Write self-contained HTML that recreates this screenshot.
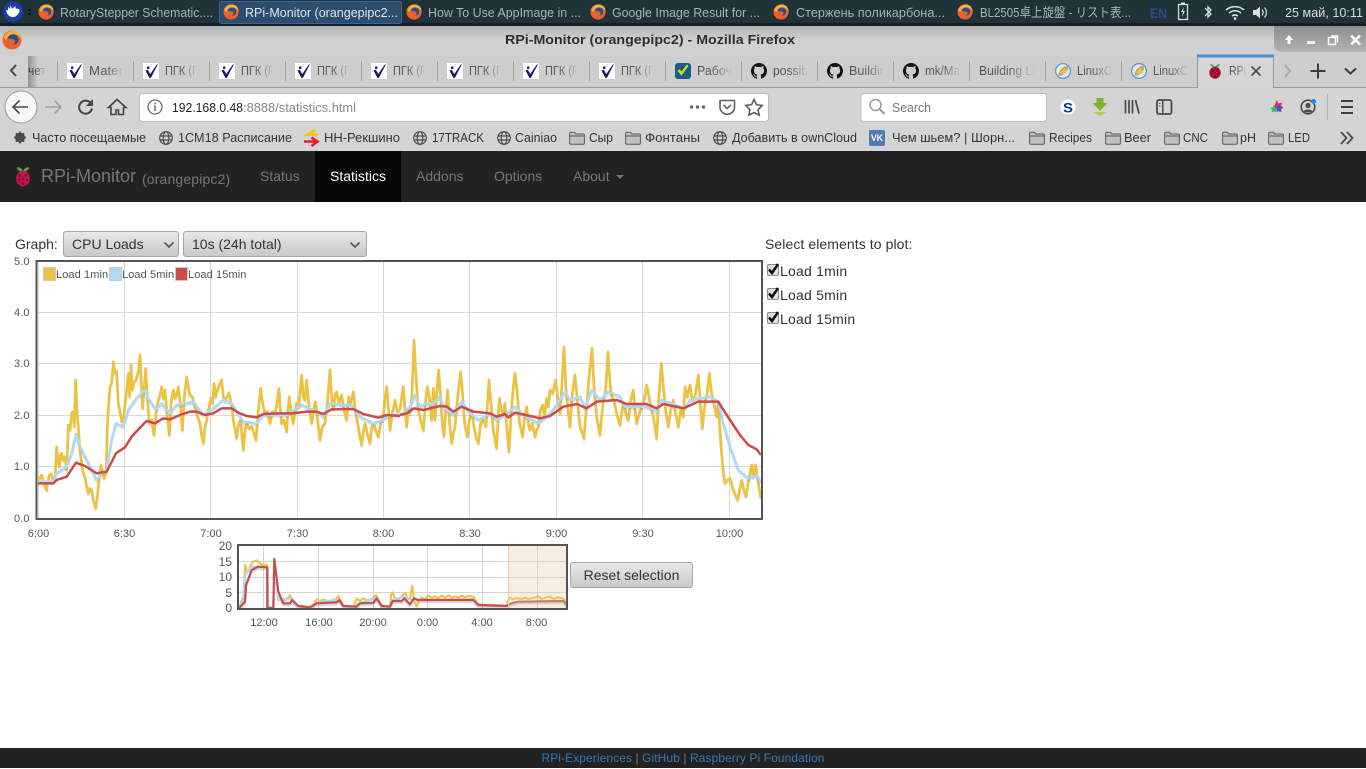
<!DOCTYPE html>
<html lang="en">
<head>
<meta charset="utf-8">
<title>RPi-Monitor (orangepipc2)</title>
<style>
html,body{margin:0;padding:0;background:#fff}
body{position:relative;width:1366px;height:768px;overflow:hidden;font-family:"Liberation Sans","Noto Sans CJK JP",sans-serif;color:#333;font-size:14px}
svg text{font-family:"Liberation Sans","Noto Sans CJK JP",sans-serif}
.abs{position:absolute;white-space:nowrap}
#nav{position:absolute;left:0;top:151px;width:1366px;height:51px;background:#222}
#nav a{position:absolute;top:0;line-height:50px;font-size:14px;color:#777;white-space:nowrap}
.sel{position:absolute;top:231px;height:24px;box-sizing:content-box;border:1px solid #a8a8a8;border-radius:3px;background:linear-gradient(#e8e8e8,#c9c9c9);line-height:24px;font-size:14px;color:#333}
.sel span{position:absolute;left:8px;top:0}
.sel svg{position:absolute;top:9px}
#reset{position:absolute;left:570px;top:562px;width:121px;height:24px;border:1px solid #a8a8a8;border-radius:3px;background:linear-gradient(#e8e8e8,#c9c9c9);font-size:14px;line-height:24px;text-align:center;color:#333}
#foot{position:absolute;left:0;top:748px;width:1366px;height:20px;background:#222;color:#777;font-size:12px;line-height:21px;text-align:center;letter-spacing:.08px}
#foot a{color:#337ab7}
.chk{position:absolute;left:780px;font-size:14px;color:#333;white-space:nowrap;letter-spacing:.22px}
</style>
</head>
<body>
<svg class="abs" style="left:0;top:0" width="1366" height="151" viewBox="0 0 1366 151">
<defs>
<linearGradient id="title" x1="0" y1="0" x2="0" y2="1"><stop offset="0" stop-color="#b4b4b4"/><stop offset=".5" stop-color="#d2d2d2"/><stop offset="1" stop-color="#cfcfcf"/></linearGradient>
<linearGradient id="wbtn" x1="0" y1="0" x2="0" y2="1"><stop offset="0" stop-color="#8e8e8e"/><stop offset="1" stop-color="#b2b2b2"/></linearGradient>
<linearGradient id="tf" x1="0" y1="0" x2="1" y2="0"><stop offset="0" stop-color="#4e4e4e"/><stop offset=".55" stop-color="#666"/><stop offset="1" stop-color="#cbcbcb"/></linearGradient>
<linearGradient id="sh" x1="0" y1="0" x2="1" y2="0"><stop offset="0" stop-color="#000" stop-opacity=".3"/><stop offset="1" stop-color="#000" stop-opacity="0"/></linearGradient>
<symbol id="ff" viewBox="0 0 16 16"><circle cx="8" cy="8" r="7.6" fill="#e8602a"/><path d="M1.4 6C3 1.4 8-.6 12 1.2c2.6 1.2 3.8 4 3.4 6.6C14.600 4.800 12 3.400 9.500 3.600 6 3.900 4 5.500 3.200 8.500 2.800 7.700 2 6.800 1.400 6z" fill="#fbb03b"/><circle cx="8.800" cy="7.800" r="4.400" fill="#25508f"/><path d="M4.500 6.500c1.500 1 4 .2 5.500 1.500 1 1 .5 3-1.500 3.500 3 .5 5.500-1.500 5-5 1.500 4-.5 7.500-4.500 8.200C5 15 2.500 11 4.500 6.500z" fill="#e8602a"/></symbol>
<symbol id="chk" viewBox="0 0 16 16"><rect width="16" height="16" fill="#fff"/><path d="M2.500 7.500l2.200-.8 2.600 4.300L13.800 1.500h1L7.800 15H6.500z" fill="#1c1762"/><circle cx="5.200" cy="4.700" r="1.300" fill="#1c1762"/></symbol>
<symbol id="gh" viewBox="0 0 16 16"><path fill="#111" d="M8 0C3.580 0 0 3.580 0 8c0 3.540 2.290 6.530 5.470 7.590.4.070.55-.17.55-.38 0-.19-.01-.82-.01-1.490-2.010.37-2.530-.49-2.690-.94-.09-.23-.48-.94-.82-1.130-.28-.15-.68-.52-.01-.53.63-.01 1.080.58 1.230.82.720 1.210 1.870.87 2.330.66.070-.52.280-.87.510-1.070-1.780-.2-3.640-.89-3.640-3.950 0-.87.310-1.590.820-2.150-.080-.2-.360-1.020.080-2.120 0 0 .670-.21 2.200.82.640-.18 1.320-.27 2-.27.680 0 1.360.09 2 .27 1.530-1.040 2.200-.82 2.200-.82.440 1.100.160 1.920.080 2.120.510.560.820 1.270.820 2.150 0 3.070-1.870 3.750-3.650 3.950.290.250.540.730.540 1.480 0 1.070-.010 1.930-.010 2.200 0 .210.150.460.550.380A8.013 8.013 0 0016 8c0-4.420-3.580-8-8-8z"/></symbol>
<symbol id="lx" viewBox="0 0 16 16"><circle cx="8" cy="8" r="7.400" fill="#dcebf7" stroke="#4c94d0" stroke-width="1.200"/><path d="M3.500 11.500C3.500 8 8 3 11.500 3c1.500 0 2 1.500 1.500 3-1 3-5 6.500-7.500 7-1.200.2-2-.4-2-1.500z" fill="#d9a93f"/><path d="M6 10l4-4M7.500 11l3.500-3.500" stroke="#f2dc9a" stroke-width=".8"/></symbol>
<symbol id="rb" viewBox="0 0 16 16"><path d="M8 4C6 1 4 1 3 1.500 4 3 5.500 4.500 8 4.500 10.500 4.500 12 3 13 1.500 12 1 10 1 8 4z" fill="#4ea24a"/><ellipse cx="8" cy="9.700" rx="5.800" ry="6" fill="#b3123f"/><circle cx="5.500" cy="7.500" r="1.100" fill="#7d0d2c"/><circle cx="10.500" cy="7.500" r="1.100" fill="#7d0d2c"/><circle cx="8" cy="10" r="1.200" fill="#7d0d2c"/><circle cx="5" cy="11" r="1.100" fill="#7d0d2c"/><circle cx="11" cy="11" r="1.100" fill="#7d0d2c"/><circle cx="8" cy="13.500" r="1.100" fill="#7d0d2c"/></symbol>
<symbol id="gl" viewBox="0 0 14 14"><g fill="none" stroke="#4b4b4b" stroke-width="1.200"><circle cx="7" cy="7" r="6.300"/><ellipse cx="7" cy="7" rx="2.800" ry="6.300"/><path d="M1 5h12M1 9h12"/></g></symbol>
<symbol id="fd" viewBox="0 0 16 14"><path d="M.6 2.500c0-.8.500-1.300 1.200-1.300h3.600l1.600 1.800h7.200c.7 0 1.200.5 1.200 1.200v7.800c0 .7-.5 1.200-1.200 1.200H1.800c-.7 0-1.200-.5-1.200-1.200z" fill="#c0c0c0" stroke="#5a5a5a" stroke-width="1"/><path d="M1 5h14" stroke="#5a5a5a" stroke-width="1"/></symbol>
</defs>

<!-- panel -->
<rect width="1366" height="25" fill="#1f3339"/>
<rect y="23" width="1366" height="3" fill="#141f23"/>
<rect x="219.500" y="1.500" width="182" height="22" rx="2" fill="#2d4d70" stroke="#3c6490"/>
<circle cx="13" cy="11.500" r="10" fill="#1d3fa6"/>
<path d="M6.500 10.500l1.500-.5.300-3.500 1.800 2.700.4-3.700 2 3.200 2.700-2.700.5 2.800c1.600-.4 3.800 0 4 1.700-1 3.500-3.500 6.800-7 6.600-3.500-.2-5.700-2.700-6.700-6.600z" fill="#fff"/>
<rect x="28" y="9" width="3" height="2" fill="#0e181b"/><rect x="28" y="13" width="3" height="2" fill="#0e181b"/>
<use href="#ff" x="38" y="4" width="16" height="16"/><use href="#ff" x="223" y="4" width="16" height="16"/><use href="#ff" x="406" y="4" width="16" height="16"/><use href="#ff" x="590" y="4" width="16" height="16"/><use href="#ff" x="773" y="4" width="16" height="16"/><use href="#ff" x="957" y="4" width="16" height="16"/>
<g font-size="13" fill="#a8b4b8">
<text x="60" y="17" textLength="153" lengthAdjust="spacingAndGlyphs">RotaryStepper Schematic....</text>
<text x="245" y="17" textLength="153" lengthAdjust="spacingAndGlyphs" fill="#dfe7ec">RPi-Monitor (orangepipc2...</text>
<text x="428" y="17" textLength="153" lengthAdjust="spacingAndGlyphs">How To Use AppImage in ...</text>
<text x="612" y="17" textLength="148" lengthAdjust="spacingAndGlyphs">Google Image Result for ...</text>
<text x="796" y="17" textLength="149" lengthAdjust="spacingAndGlyphs">Стержень поликарбона...</text>
<text x="980" y="17" textLength="151" lengthAdjust="spacingAndGlyphs">BL2505卓上旋盤 - リスト表...</text>
<text x="1285" y="17" textLength="78" lengthAdjust="spacingAndGlyphs" fill="#d8dfe2">25 май, 10:11</text>
</g>
<text x="1150" y="18" font-size="14" font-weight="bold" fill="#2f4a90" textLength="17" lengthAdjust="spacingAndGlyphs">EN</text>
<rect x="1178.500" y="4.500" width="9" height="15" fill="none" stroke="#d8dfe2" stroke-width="1.300"/><rect x="1181" y="2.500" width="4" height="2" fill="#d8dfe2"/><path d="M1184 7l-3 5h2l-1 5 3-6h-2z" fill="#d8dfe2"/>
<path d="M1205 8l6 6-3 3V7l3 3-6 6" fill="none" stroke="#d8dfe2" stroke-width="1.300"/>
<g fill="none" stroke="#d8dfe2" stroke-width="1.600"><path d="M1226 10c5.500-4.500 12.500-4.500 18 0"/><path d="M1229 13c3.500-3 8.500-3 12 0"/><path d="M1232 16c2-1.500 4-1.500 6 0"/></g><circle cx="1235" cy="18.500" r="1.400" fill="#d8dfe2"/>
<path d="M1253 10h3l4-3.500v12l-4-3.500h-3z" fill="#d8dfe2"/><g fill="none" stroke="#d8dfe2" stroke-width="1.200"><path d="M1262 9.500c1.500 2 1.500 4 0 6"/><path d="M1264.500 7.500c2.500 3 2.500 7 0 10"/></g>

<!-- titlebar -->
<rect y="26" width="1366" height="30" fill="url(#title)"/>
<path d="M1274 26h92v26h-84c-5 0-8-3-8-7z" fill="url(#wbtn)"/>
<use href="#ff" x="2" y="30" width="20" height="20"/>
<text x="505" y="44" font-size="13" font-weight="bold" fill="#2e2e2e" textLength="290" lengthAdjust="spacingAndGlyphs">RPi-Monitor (orangepipc2) - Mozilla Firefox</text>
<path d="M1285 40l4-5 4 5h-2.500v4h-3v-4z" fill="#fff"/>
<rect x="1307" y="41" width="8" height="3" fill="#f2f2f2"/>
<g fill="none" stroke="#fff" stroke-width="1.500"><rect x="1328.500" y="37.500" width="7" height="7"/><path d="M1331 36h6.500v6.500"/></g>
<path d="M1351 35.500l9 9m0-9l-9 9" stroke="#fff" stroke-width="2.600"/>

<!-- tabs -->
<rect y="56" width="1366" height="32" fill="#cecece"/>
<rect y="87" width="1366" height="1" fill="#9a9a9a"/>
<g fill="#a3a3a3">
<rect x="57" y="61" width="1" height="20"/><rect x="133" y="61" width="1" height="20"/><rect x="209" y="61" width="1" height="20"/><rect x="285" y="61" width="1" height="20"/><rect x="361" y="61" width="1" height="20"/><rect x="437" y="61" width="1" height="20"/><rect x="513" y="61" width="1" height="20"/><rect x="589" y="61" width="1" height="20"/><rect x="665" y="61" width="1" height="20"/><rect x="741" y="61" width="1" height="20"/><rect x="817" y="61" width="1" height="20"/><rect x="893" y="61" width="1" height="20"/><rect x="969" y="61" width="1" height="20"/><rect x="1045" y="61" width="1" height="20"/><rect x="1121" y="61" width="1" height="20"/>
</g>
<text x="28" y="75" font-size="13" fill="url(#tf)" textLength="18" lengthAdjust="spacingAndGlyphs">чет</text>
<rect x="0" y="55" width="28" height="32" fill="#d2d2d2"/>
<rect x="28" y="56" width="10" height="31" fill="url(#sh)"/>
<path d="M16 65l-5 5.500 5 5.500" fill="none" stroke="#4a4a4a" stroke-width="2"/>
<use href="#chk" x="67" y="63" width="16" height="16"/><use href="#chk" x="143" y="63" width="16" height="16"/><use href="#chk" x="219" y="63" width="16" height="16"/><use href="#chk" x="295" y="63" width="16" height="16"/><use href="#chk" x="371" y="63" width="16" height="16"/><use href="#chk" x="447" y="63" width="16" height="16"/><use href="#chk" x="523" y="63" width="16" height="16"/><use href="#chk" x="599" y="63" width="16" height="16"/>
<rect x="675" y="63" width="16" height="16" rx="3" fill="#1d5a86"/><path d="M678 71l3.500 4 6.500-9-1-1-5.500 7-2-2.200z" fill="#b8e02f" stroke="#b8e02f" stroke-width=".8"/>
<use href="#gh" x="751" y="63" width="16" height="16"/><use href="#gh" x="827" y="63" width="16" height="16"/><use href="#gh" x="903" y="63" width="16" height="16"/>
<use href="#lx" x="1055" y="63" width="16" height="16"/><use href="#lx" x="1131" y="63" width="16" height="16"/>
<g font-size="13" fill="url(#tf)">
<text x="89" y="75" textLength="34" lengthAdjust="spacingAndGlyphs">Mater</text>
<text x="165" y="75" textLength="33" lengthAdjust="spacingAndGlyphs">ПГК (Г</text>
<text x="241" y="75" textLength="33" lengthAdjust="spacingAndGlyphs">ПГК (Г</text>
<text x="317" y="75" textLength="33" lengthAdjust="spacingAndGlyphs">ПГК (Г</text>
<text x="393" y="75" textLength="33" lengthAdjust="spacingAndGlyphs">ПГК (Г</text>
<text x="469" y="75" textLength="33" lengthAdjust="spacingAndGlyphs">ПГК (Г</text>
<text x="545" y="75" textLength="33" lengthAdjust="spacingAndGlyphs">ПГК (Г</text>
<text x="621" y="75" textLength="33" lengthAdjust="spacingAndGlyphs">ПГК (Г</text>
<text x="697" y="75" textLength="35" lengthAdjust="spacingAndGlyphs">Рабоч</text>
<text x="773" y="75" textLength="35" lengthAdjust="spacingAndGlyphs">possib</text>
<text x="849" y="75" textLength="35" lengthAdjust="spacingAndGlyphs">Buildir</text>
<text x="925" y="75" textLength="35" lengthAdjust="spacingAndGlyphs">mk/Ma</text>
<text x="979" y="75" textLength="56" lengthAdjust="spacingAndGlyphs">Building Li</text>
<text x="1077" y="75" textLength="35" lengthAdjust="spacingAndGlyphs">LinuxC</text>
<text x="1153" y="75" textLength="35" lengthAdjust="spacingAndGlyphs">LinuxC</text>
</g>
<path d="M1197.500 88V55.500h76V88" fill="#d6d6d6" stroke="#9a9a9a"/>
<rect x="1197" y="54.500" width="77" height="3" fill="#4a90d9"/>
<use href="#rb" x="1207" y="63" width="16" height="16"/>
<text x="1229" y="75" font-size="13" fill="url(#tf)" textLength="17" lengthAdjust="spacingAndGlyphs">RPi</text>
<path d="M1251.500 66.500l9 9m0-9l-9 9" stroke="#4a4a4a" stroke-width="1.600"/>
<path d="M1285 65l5 6-5 6" fill="none" stroke="#a9a9a9" stroke-width="2"/>
<path d="M1318 63.500v15M1310.500 71h15" stroke="#3a3a3a" stroke-width="2"/>
<path d="M1345 68.500l5.500 5 5.500-5" fill="none" stroke="#3a3a3a" stroke-width="2"/>

<!-- nav -->
<rect y="88" width="1366" height="63" fill="#d4d4d4"/>
<circle cx="21" cy="107" r="16" fill="#f7f7f7" stroke="#9a9a9a"/>
<path d="M28 107H13.500M19.500 100.500L13 107l6.500 6.500" fill="none" stroke="#4a4a4a" stroke-width="1.600"/>
<path d="M45 107h15M54.500 100.500L61 107l-6.500 6.500" fill="none" stroke="#a2a2a2" stroke-width="1.600"/>
<path d="M91 103.500a6.500 6.500 0 1 0 1 5" fill="none" stroke="#444" stroke-width="2"/><path d="M93 99v7h-7z" fill="#444"/>
<path d="M117 99.500l-8.500 8h2.500v7h5v-4.500h2.500v4.500h5v-7h2.500z" fill="none" stroke="#444" stroke-width="1.600"/>
<rect x="139.500" y="93.500" width="629" height="28" rx="3" fill="#fff" stroke="#bdbdbd"/>
<circle cx="155" cy="107" r="7" fill="none" stroke="#6c6c6c" stroke-width="1.300"/><rect x="154.200" y="105.500" width="1.600" height="5.500" fill="#6c6c6c"/><rect x="154.200" y="102.800" width="1.600" height="1.600" fill="#6c6c6c"/>
<text x="172" y="112" font-size="13" fill="#222" textLength="71" lengthAdjust="spacingAndGlyphs">192.168.0.48</text>
<text x="243" y="112" font-size="13" fill="#888" textLength="113" lengthAdjust="spacingAndGlyphs">:8888/statistics.html</text>
<circle cx="691.500" cy="107" r="1.700" fill="#6a6a6a"/><circle cx="697.500" cy="107" r="1.700" fill="#6a6a6a"/><circle cx="703.500" cy="107" r="1.700" fill="#6a6a6a"/>
<path d="M720 100.500h14.500v6.500a7.200 7.200 0 0 1-14.500 0z" fill="none" stroke="#5f5f5f" stroke-width="1.600"/><path d="M723.500 104.800l3.700 3.700 3.700-3.700" fill="none" stroke="#5f5f5f" stroke-width="1.600"/>
<path d="M754 99.500l2.500 5.200 5.700.8-4.100 4 1 5.700-5.100-2.700-5.100 2.700 1-5.700-4.100-4 5.700-.8z" fill="none" stroke="#5f5f5f" stroke-width="1.600"/>
<rect x="861" y="93.500" width="185.500" height="28" rx="3" fill="#fff" stroke="#bdbdbd"/>
<circle cx="875.500" cy="105" r="5.500" fill="none" stroke="#9a9a9a" stroke-width="1.500"/><path d="M879.500 109l5 5" stroke="#9a9a9a" stroke-width="2"/>
<text x="892" y="112" font-size="13" fill="#777" textLength="39" lengthAdjust="spacingAndGlyphs">Search</text>
<circle cx="1068" cy="107" r="7.500" fill="#fff"/><text x="1063" y="112.500" font-size="14" font-weight="bold" fill="#0b3a8c" textLength="10" lengthAdjust="spacingAndGlyphs">S</text>
<path d="M1096.500 98h7v5h4l-7.500 8-7.500-8h4z" fill="#7fb32c"/><path d="M1094 112h12l-6 4z" fill="#a3cf4a"/>
<path d="M1125.500 100v13.500M1129 100v13.500M1132.500 100v13.500M1135.500 100l3.500 13.500" stroke="#4a4a4a" stroke-width="1.700" fill="none"/>
<rect x="1157" y="100" width="14.500" height="14" rx="2" fill="none" stroke="#4a4a4a" stroke-width="1.800"/><rect x="1162" y="100" width="1.500" height="14" fill="#4a4a4a"/><path d="M1159 103.500h1.500M1159 106h1.500" stroke="#4a4a4a"/>
<path d="M1277 100l1.500 3.500 3.500-1-.8 3.500 2.300 2-3.500 1 .5 3-3.500-1.500-2-3-2 .5z" fill="#ef2b55"/>
<path d="M1279 104l1.300 2.700 3 .4-2.200 2.100.5 3-2.600-1.400-2.600 1.400.5-3-2.200-2.100 3-.4z" fill="#3c55d8"/>
<path d="M1274 105l1 2.500 2.800.3-2 1.900.5 2.800-2.300-1.300-2.500 1.300.5-2.800-2-1.900 2.800-.3z" fill="#22c75c"/>
<circle cx="1308" cy="107" r="6.800" fill="none" stroke="#4a4a4a" stroke-width="1.600"/><circle cx="1308" cy="105.500" r="2.600" fill="#4a4a4a"/><path d="M1303.500 111c1.500-2 7.500-2 9 0-1.500 2-7.500 2-9 0z" fill="#4a4a4a"/><circle cx="1313.500" cy="101.500" r="2.500" fill="#1a8cf0"/>
<rect x="1327" y="94" width="1" height="26" fill="#b4b4b4"/>
<path d="M1341 101h12M1341 107h12M1341 113h12" stroke="#3f3f3f" stroke-width="2"/>

<!-- bookmarks -->
<circle cx="20" cy="137.500" r="3.600" fill="none" stroke="#4b4b4b" stroke-width="2.600"/><path d="M20 131.500v12M14 137.500h12M15.800 133.300l8.400 8.400M24.200 133.300l-8.400 8.400" stroke="#4b4b4b" stroke-width="1.800"/>
<use href="#gl" x="159" y="131" width="14" height="14"/><use href="#gl" x="413" y="131" width="14" height="14"/><use href="#gl" x="497" y="131" width="14" height="14"/><use href="#gl" x="713" y="131" width="14" height="14"/>
<path d="M315 130l-7 4.500h10" fill="none" stroke="#f5c400" stroke-width="2.600"/><path d="M304 141.500h13M311.500 137.500l6 4-6 4.500" fill="none" stroke="#e8202a" stroke-width="2.600"/>
<use href="#fd" x="569" y="131" width="16" height="14"/><use href="#fd" x="625" y="131" width="16" height="14"/><use href="#fd" x="1029" y="131" width="16" height="14"/><use href="#fd" x="1105" y="131" width="16" height="14"/><use href="#fd" x="1164" y="131" width="16" height="14"/><use href="#fd" x="1222" y="131" width="16" height="14"/><use href="#fd" x="1268" y="131" width="16" height="14"/>
<rect x="869" y="130" width="16" height="16" rx="2" fill="#4f7db3"/><text x="871" y="141" font-size="9" font-weight="bold" fill="#fff" textLength="12" lengthAdjust="spacingAndGlyphs">VK</text>
<g font-size="13" fill="#333">
<text x="32" y="142" textLength="114" lengthAdjust="spacingAndGlyphs">Часто посещаемые</text>
<text x="178" y="142" textLength="114" lengthAdjust="spacingAndGlyphs">1СМ18 Расписание</text>
<text x="324" y="142" textLength="76" lengthAdjust="spacingAndGlyphs">НН-Рекшино</text>
<text x="432" y="142" textLength="52" lengthAdjust="spacingAndGlyphs">17TRACK</text>
<text x="515" y="142" textLength="42" lengthAdjust="spacingAndGlyphs">Cainiao</text>
<text x="589" y="142" textLength="24" lengthAdjust="spacingAndGlyphs">Сыр</text>
<text x="645" y="142" textLength="55" lengthAdjust="spacingAndGlyphs">Фонтаны</text>
<text x="732" y="142" textLength="125" lengthAdjust="spacingAndGlyphs">Добавить в ownCloud</text>
<text x="892" y="142" textLength="123" lengthAdjust="spacingAndGlyphs">Чем шьем? | Шорн...</text>
<text x="1049" y="142" textLength="43" lengthAdjust="spacingAndGlyphs">Recipes</text>
<text x="1124" y="142" textLength="27" lengthAdjust="spacingAndGlyphs">Beer</text>
<text x="1183" y="142" textLength="25" lengthAdjust="spacingAndGlyphs">CNC</text>
<text x="1240" y="142" textLength="16" lengthAdjust="spacingAndGlyphs">pH</text>
<text x="1288" y="142" textLength="22" lengthAdjust="spacingAndGlyphs">LED</text>
</g>
<path d="M1341 132l5.500 6-5.500 6M1347 132l5.500 6-5.500 6" fill="none" stroke="#4a4a4a" stroke-width="1.800"/>
</svg>

<!-- web navbar -->
<div id="nav">
  <svg class="abs" style="left:15px;top:15px" width="16" height="21" viewBox="0 0 16 21"><path d="M8 5C6 1 3 1 1.500 1.500 2.500 4 5 6 8 6c3 0 5.500-2 6.500-4.500C13 1 10 1 8 5z" fill="#5f9b3f"/><ellipse cx="8" cy="12.500" rx="7" ry="7.800" fill="#c2124a"/><g fill="#7e0c30"><circle cx="5" cy="9.500" r="1.300"/><circle cx="11" cy="9.500" r="1.300"/><circle cx="8" cy="13" r="1.400"/><circle cx="3.800" cy="14" r="1.200"/><circle cx="12.200" cy="14" r="1.200"/><circle cx="8" cy="17.500" r="1.300"/></g></svg>
  <a style="left:41px;font-size:18px">RPi-Monitor</a>
  <a style="left:142px;font-size:14px;top:3px;letter-spacing:.15px">(orangepipc2)</a>
  <a style="left:260px">Status</a>
  <div class="abs" style="left:315px;top:0;width:86px;height:51px;background:#080808"></div>
  <a style="left:330px;color:#fff">Statistics</a>
  <a style="left:416px">Addons</a>
  <a style="left:494px">Options</a>
  <a style="left:573px">About</a>
  <div class="abs" style="left:616px;top:24px;width:0;height:0;border-left:4px solid transparent;border-right:4px solid transparent;border-top:4px solid #777"></div>
</div>

<div class="abs" style="left:15px;top:235px;line-height:18px">Graph:</div>
<div class="sel" style="left:63px;width:114px"><span>CPU Loads</span><svg style="left:99px" width="12" height="8"><path d="M1.500 1.500L6 6l4.500-4.500" fill="none" stroke="#555" stroke-width="1.600"/></svg></div>
<div class="sel" style="left:183px;width:182px"><span>10s (24h total)</span><svg style="left:165px" width="12" height="8"><path d="M1.500 1.500L6 6l4.500-4.500" fill="none" stroke="#555" stroke-width="1.600"/></svg></div>
<div class="abs" style="left:765px;top:235px;line-height:18px;letter-spacing:.08px">Select elements to plot:</div>

<svg class="abs" style="left:766px;top:262px" width="14" height="64" viewBox="0 0 14 64">
<g fill="#e0e0e0" stroke="#8c8c8c"><rect x="1.500" y="2.500" width="11" height="11" rx="1.500"/><rect x="1.500" y="26.500" width="11" height="11" rx="1.500"/><rect x="1.500" y="50.500" width="11" height="11" rx="1.500"/></g>
<g fill="none" stroke="#111" stroke-width="2.500"><path d="M3 7.500l3 3.500 6-9"/><path d="M3 31.500l3 3.500 6-9"/><path d="M3 55.500l3 3.500 6-9"/></g>
</svg>
<div class="chk" style="top:263px">Load 1min</div>
<div class="chk" style="top:287px">Load 5min</div>
<div class="chk" style="top:311px">Load 15min</div>

<!-- charts -->
<svg class="abs" style="left:0;top:250px" width="770" height="390" viewBox="0 250 770 390">
<defs>
<clipPath id="cp"><rect x="38" y="262" width="723" height="256"/></clipPath>
<clipPath id="cp2"><rect x="239" y="545" width="328" height="63"/></clipPath>
<polyline id="y1" points="20,425 27,418 35,405 42,432 50,450 54,420 58,405 64,402 70,425 75,415 80,320 84,360 88,380 92,345 95,340 100,360 105,350 110,390 115,255 120,270 125,220 130,215 133,260 137,120 141,210 145,260 150,330 155,370 160,400 165,410 170,440 175,460 180,445 185,450 190,480 197,505 201,480 205,440 209,400 213,375 218,395 222,415 228,400 232,260 236,190 240,140 245,130 250,65 256,100 260,95 265,190 270,215 275,245 280,240 285,195 290,150 295,100 299,170 303,75 307,150 312,125 318,120 322,105 326,90 330,45 334,130 338,205 342,150 347,85 352,170 358,250 365,240 372,285 378,220 385,180 390,165 395,140 400,175 405,150 410,210 418,285 424,180 430,150 435,175 440,165 445,140 451,190 457,270 463,170 470,110 475,140 480,165 487,170 495,200 503,230 510,250 515,285 520,310 525,260 530,240 537,200 543,175 548,190 552,130 557,170 562,150 568,135 575,120 580,170 585,180 591,170 597,158 604,190 610,240 615,265 620,295 626,250 632,240 636,290 640,330 645,270 650,250 658,265 665,260 672,280 678,300 685,210 692,145 698,190 705,220 712,215 720,250 727,215 735,220 741,190 747,145 751,210 755,250 762,240 770,275 774,210 778,170 784,220 790,250 795,215 800,190 806,200 815,105 820,170 825,180 830,120 837,200 845,250 851,205 857,185 863,240 870,300 877,260 885,250 892,190 900,90 905,170 910,210 915,165 920,155 927,190 935,165 942,210 950,240 956,170 962,190 970,155 977,220 985,260 990,290 995,315 1000,275 1005,250 1012,280 1020,310 1025,265 1030,250 1037,270 1045,290 1052,250 1060,230 1065,175 1070,140 1075,200 1080,270 1087,220 1095,180 1102,215 1110,210"/>
<polyline id="y2" points="30,240 35,200 40,170 45,240 50,290 55,240 60,250 66,190 72,30 78,140 85,240 92,270 100,300 106,220 112,170 118,200 125,270 130,175 135,270 140,190 146,120 152,200 157,280 162,320 167,240 173,180 179,280 185,340 190,310 195,290 203,200 212,125 217,180 224,280 232,320 238,270 245,240 252,290 258,320 265,340 272,280 280,270 288,290 297,150 303,220 310,300 320,355 324,270 328,205 334,240 340,250 345,220 351,300 357,365 363,260 368,190 375,130 381,180 389,280 398,320 404,260 410,230 415,280 420,300 427,280 435,320 440,300 445,290 451,240 458,225 464,260 470,205 475,230 480,180 488,190 497,150 503,200 510,250 516,160 522,50 528,180 534,240 540,290 547,190 555,135 562,210 570,290 582,325 586,270 590,230 598,130 606,55 612,170 620,260 630,315 635,260 640,210 647,180 654,65 660,160 665,200 672,210 680,250 690,285 695,250 700,220 708,250 715,270 722,210 730,180 735,240 740,280 748,250 755,230 762,210 770,165 777,200 785,240 792,270 800,325 806,210 814,100 820,170 827,240 835,290 842,240 850,210 857,250 865,290 872,240 880,260 885,170 892,200 900,165 907,210 915,200 925,135 931,220 937,295 941,250 945,220 951,190 958,130 965,190 972,220 980,260 985,220 990,300 995,370 1000,430 1005,460 1012,450 1020,445 1030,480 1043,510 1049,480 1055,450 1062,480 1068,500 1076,450 1085,405 1090,440 1097,405 1105,460 1113,505"/>
<polyline id="b1" points="20,425 70,425 80,400 110,380 125,340 138,282 150,320 170,360 185,390 200,420 215,400 230,390 245,300 258,250 280,260 295,210 320,175 345,150 355,175 378,208 395,190 420,220 440,195 470,190 490,185 520,225 550,205 580,180 605,190 620,215 640,245 680,250 700,225 750,225 770,225 815,195 860,215 880,230 900,190 940,195 965,195 990,230 1030,250 1060,240 1080,225 1110,225"/>
<polyline id="b2" points="30,255 40,250 60,230 75,195 90,230 110,220 130,225 148,200 165,235 190,255 215,215 240,250 265,270 300,250 320,270 345,255 375,230 400,255 445,280 480,250 500,225 525,185 540,210 570,200 585,235 605,180 630,210 655,185 690,200 705,230 770,230 800,245 815,210 885,235 900,210 960,200 985,215 1000,280 1020,350 1045,420 1075,445 1100,435 1113,458"/>
<polyline id="r1" points="20,430 70,430 80,420 110,410 138,368 165,378 200,400 230,395 258,340 285,322 305,290 335,258 350,243 375,250 400,235 420,238 450,225 480,215 500,215 525,225 550,220 575,205 605,205 625,218 650,228 680,232 700,222 750,220 790,220 830,215 860,215 880,222 905,208 970,207 1000,222 1045,233 1070,225 1110,228"/>
<polyline id="r2" points="30,255 50,250 72,235 100,240 150,228 170,230 190,245 215,230 250,245 300,250 320,260 345,252 355,262 375,248 420,258 450,265 480,258 520,230 560,222 590,235 620,215 680,210 710,222 770,222 800,235 820,222 880,235 925,215 985,215 1010,255 1050,315 1075,345 1100,358 1113,375"/>
<polyline id="oy" points="88,218 93,200 100,185 105,90 110,105 115,110 122,90 130,80 140,76 150,85 160,92 170,88 175,218 190,218 193,72 205,180 215,200 228,195 240,180 255,210 280,217 310,215 316,198 322,192 330,198 338,194 345,195 355,199 365,196 378,192 385,183 392,198 400,212 430,215 436,200 440,190 450,198 458,190 470,195 485,192 498,180 507,198 515,212 540,215 543,180 548,172 555,190 562,198 570,188 578,180 585,173 595,192 600,190 607,153 613,200 620,215 628,195 635,188 645,192 655,182 665,188 675,184 685,189 695,182 705,188 715,181 725,188 735,184 745,188 755,182 765,187 775,183 790,185 805,208 890,212 895,195 900,187 910,193 920,190 935,192 945,188 955,192 965,190 985,184 995,192 1005,188 1020,185 1030,192 1045,187 1060,190 1068,205"/>
<polyline id="ob" points="88,218 100,195 105,120 125,95 150,95 172,100 175,218 190,218 193,100 205,195 240,190 255,210 300,217 320,202 380,195 400,213 430,215 445,205 495,190 515,213 540,213 548,195 580,185 605,195 615,195 630,195 790,193 805,210 890,213 905,203 1060,198 1068,208"/>
<polyline id="or" points="88,218 105,200 108,150 125,105 145,95 172,97 172,219 190,219 193,72 205,170 220,205 240,205 247,195 265,213 300,217 320,205 380,202 388,195 400,213 440,215 450,205 490,203 500,190 515,213 540,215 548,198 575,198 583,190 600,208 612,190 625,195 790,195 805,210 890,213 905,205 925,200 1060,198 1068,208"/>
</defs>
<!-- main grid -->
<g stroke="#d8d8d8" stroke-width="1" fill="none">
<path d="M38 312.500H762M38 363.500H762M38 415.500H762M38 466.500H762"/>
<path d="M38.500 261V518M124.500 261V518M210.500 261V518M297.500 261V518M383.500 261V518M469.500 261V518M556.500 261V518M642.500 261V518M729.500 261V518"/>
</g>
<g clip-path="url(#cp)" fill="none" stroke-linejoin="round">
<g transform="translate(30,341.500) scale(.33333)" stroke="#000" stroke-opacity=".1" stroke-width="8"><use href="#y1"/></g>
<g transform="translate(390,331.500) scale(.33333)" stroke="#000" stroke-opacity=".1" stroke-width="8"><use href="#y2"/></g>
<g transform="translate(30,340) scale(.33333)" stroke="#edc240" stroke-width="8"><use href="#y1"/></g>
<g transform="translate(390,330) scale(.33333)" stroke="#edc240" stroke-width="8"><use href="#y2"/></g>
<g transform="translate(30,341.500) scale(.33333)" stroke="#000" stroke-opacity=".1" stroke-width="8"><use href="#b1"/></g>
<g transform="translate(390,331.500) scale(.33333)" stroke="#000" stroke-opacity=".1" stroke-width="8"><use href="#b2"/></g>
<g transform="translate(30,340) scale(.33333)" stroke="#afd8f8" stroke-width="8"><use href="#b1"/></g>
<g transform="translate(390,330) scale(.33333)" stroke="#afd8f8" stroke-width="8"><use href="#b2"/></g>
<g transform="translate(30,340) scale(.33333)" stroke="#cb4b4b" stroke-width="7.500"><use href="#r1"/></g>
<g transform="translate(390,330) scale(.33333)" stroke="#cb4b4b" stroke-width="7.500"><use href="#r2"/></g>
</g>
<rect x="36.500" y="261" width="725.500" height="258" fill="none" stroke="#545454" stroke-width="2"/>
<!-- legend -->
<rect x="43.500" y="267.500" width="12" height="13" fill="#edc240" stroke="#ccc"/>
<rect x="109.500" y="267.500" width="12" height="13" fill="#afd8f8" stroke="#ccc"/>
<rect x="175.500" y="267.500" width="12" height="13" fill="#cb4b4b" stroke="#ccc"/>
<g font-size="11" fill="#545454" letter-spacing=".1">
<text x="56" y="278">Load 1min</text><text x="122" y="278">Load 5min</text><text x="188" y="278">Load 15min</text>
<text x="14" y="265">5.0</text><text x="14" y="316">4.0</text><text x="14" y="367">3.0</text><text x="14" y="419">2.0</text><text x="14" y="470">1.0</text><text x="14" y="522">0.0</text>
</g>
<g font-size="11" fill="#545454" text-anchor="middle">
<text x="38.500" y="537">6:00</text><text x="124.500" y="537">6:30</text><text x="211" y="537">7:00</text><text x="297.500" y="537">7:30</text><text x="383.500" y="537">8:00</text><text x="470" y="537">8:30</text><text x="556.500" y="537">9:00</text><text x="643" y="537">9:30</text><text x="729.500" y="537">10:00</text>
</g>
<!-- overview -->
<g stroke="#d4d4d4" fill="none">
<path d="M239 561.500H567M239 577.500H567M239 592.500H567"/>
<path d="M263.500 545V608M318.500 545V608M373.500 545V608M427.500 545V608M482.500 545V608M537.500 545V608"/>
</g>
<g clip-path="url(#cp2)" fill="none" stroke-linejoin="round">
<g transform="translate(210,537) scale(.33333)" stroke="#000" stroke-opacity=".15" stroke-width="7"><use href="#or"/></g>
<g transform="translate(210,535) scale(.33333)" stroke="#edc240" stroke-width="6"><use href="#oy"/></g>
<g transform="translate(210,535) scale(.33333)" stroke="#afd8f8" stroke-width="7"><use href="#ob"/></g>
<g transform="translate(210,535) scale(.33333)" stroke="#cb4b4b" stroke-width="6.500"><use href="#or"/></g>
</g>
<rect x="508.500" y="545" width="58.500" height="63" fill="#e8cfac" fill-opacity=".35"/>
<path d="M508.500 545V608" stroke="#e8cfac"/>
<rect x="238" y="545" width="329" height="64" fill="none" stroke="#545454" stroke-width="2"/>
<g font-size="12" fill="#545454" text-anchor="end">
<text x="232" y="550">20</text><text x="232" y="566">15</text><text x="232" y="581">10</text><text x="232" y="597">5</text><text x="232" y="612">0</text>
</g>
<g font-size="11" fill="#545454" text-anchor="middle">
<text x="264" y="626">12:00</text><text x="319" y="626">16:00</text><text x="373" y="626">20:00</text><text x="427.500" y="626">0:00</text><text x="482" y="626">4:00</text><text x="536.500" y="626">8:00</text>
</g>
</svg>
<div id="reset">Reset selection</div>

<div id="foot"><a>RPi-Experiences</a> | <a>GitHub</a> | <a>Raspberry Pi Foundation</a></div>
</body>
</html>
